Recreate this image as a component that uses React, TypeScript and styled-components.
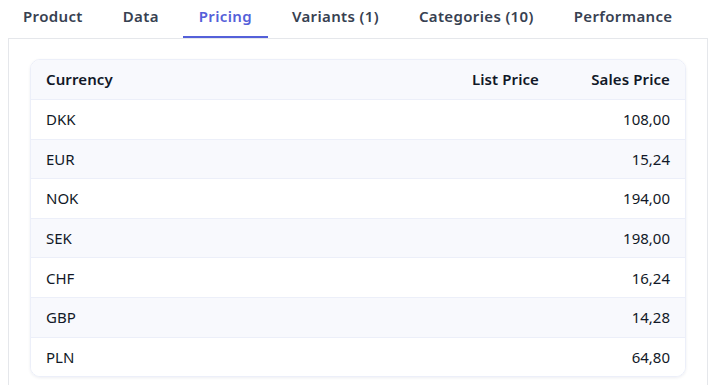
import styled, { createGlobalStyle } from "styled-components";

interface PriceRow {
  currency: string;
  listPrice: string;
  salesPrice: string;
}

const tabs = ["Product", "Data", "Pricing", "Variants (1)", "Categories (10)", "Performance"];

const prices: PriceRow[] = [
  { currency: "DKK", listPrice: "", salesPrice: "108,00" },
  { currency: "EUR", listPrice: "", salesPrice: "15,24" },
  { currency: "NOK", listPrice: "", salesPrice: "194,00" },
  { currency: "SEK", listPrice: "", salesPrice: "198,00" },
  { currency: "CHF", listPrice: "", salesPrice: "16,24" },
  { currency: "GBP", listPrice: "", salesPrice: "14,28" },
  { currency: "PLN", listPrice: "", salesPrice: "64,80" },
];

function App() {
  return (
    <>
      <GlobalStyle />
      <Page>
        <TabList>
          {tabs.map((tab) => (
            <Tab key={tab} active={tab === "Pricing"}>
              {tab}
            </Tab>
          ))}
        </TabList>
        <Panel>
          <Card>
            <Table>
              <colgroup>
                <col />
                <col style={{ width: 120 }} />
                <col style={{ width: 131 }} />
              </colgroup>
              <thead>
                <tr>
                  <HeadCell>Currency</HeadCell>
                  <HeadCell align="right">List Price</HeadCell>
                  <HeadCell align="right">Sales Price</HeadCell>
                </tr>
              </thead>
              <tbody>
                {prices.map((row, i) => (
                  <Row key={row.currency} striped={i % 2 === 1}>
                    <Cell>{row.currency}</Cell>
                    <Cell align="right">{row.listPrice}</Cell>
                    <Cell align="right">{row.salesPrice}</Cell>
                  </Row>
                ))}
              </tbody>
            </Table>
          </Card>
        </Panel>
      </Page>
    </>
  );
}

export default App;

const GlobalStyle = createGlobalStyle`
  body {
    margin: 0;
    background: #ffffff;
    font-family: "Noto Sans", "Open Sans", sans-serif;
    color: #111827;
  }
`;

const Page = styled.div`
  padding: 0 8px;
`;

const TabList = styled.div`
  display: flex;
  gap: 8px;
  margin-left: -1px;
  height: 38px;
`;

const Tab = styled.div<{ active?: boolean }>`
  box-sizing: border-box;
  height: 38px;
  padding: 5px 16px 0;
  font-size: 15px;
  line-height: 22px;
  font-weight: 600;
  letter-spacing: 0.35px;
  color: ${(p) => (p.active ? "#5460d9" : "#374151")};
  border-bottom: 2px solid ${(p) => (p.active ? "#5460d9" : "transparent")};
  white-space: nowrap;
  cursor: pointer;
`;

const Panel = styled.div`
  border: 1px solid #e5e7eb;
  padding: 20px 21px;
`;

const Card = styled.div`
  border: 1px solid #eceff9;
  border-radius: 10px;
  overflow: hidden;
  box-shadow: 0 1px 3px rgba(30, 41, 90, 0.08);
`;

const Table = styled.table`
  width: 100%;
  border-collapse: collapse;
  table-layout: fixed;
`;

const HeadCell = styled.th<{ align?: string }>`
  height: 38px;
  padding: 0 15px 1px;
  background: #f8f9fd;
  border-bottom: 1px solid #eceff9;
  font-size: 15px;
  font-weight: 600;
  letter-spacing: 0.1px;
  color: #111827;
  text-align: ${(p) => p.align || "left"};
`;

const Row = styled.tr<{ striped?: boolean }>`
  background: ${(p) => (p.striped ? "#f8f9fd" : "#ffffff")};
  border-bottom: 1px solid #eceff9;

  &:last-child {
    border-bottom: none;
  }
`;

const Cell = styled.td<{ align?: string }>`
  height: 38.6px;
  padding: 0 15px;
  font-size: 15px;
  color: #111827;
  text-align: ${(p) => p.align || "left"};
`;
